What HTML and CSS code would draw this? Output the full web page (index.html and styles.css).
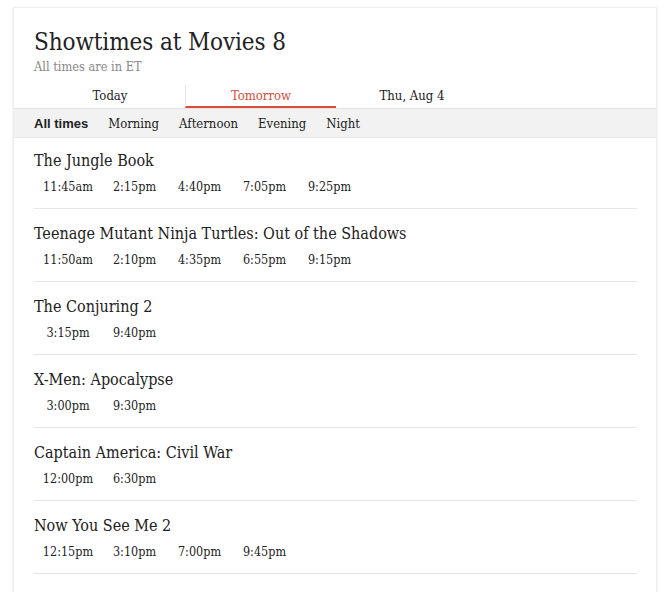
FILE: index.html
```html
<!DOCTYPE html>
<html lang="en">
<head>
<meta charset="utf-8">
<title>Showtimes at Movies 8</title>
<link rel="stylesheet" href="styles.css">
</head>
<body>
<div class="card">
  <div class="header">
    <h1 class="title">Showtimes at Movies 8</h1>
    <div class="subtitle">All times are in ET</div>
  </div>
  <div class="tabs">
    <div class="tab">Today</div>
    <div class="tab active">Tomorrow</div>
    <div class="tab">Thu, Aug 4</div>
  </div>
  <div class="filters">
    <span class="filter selected">All times</span>
    <span class="filter">Morning</span>
    <span class="filter">Afternoon</span>
    <span class="filter">Evening</span>
    <span class="filter">Night</span>
  </div>
  <div class="movies">
    <div class="movie">
      <div class="movie-title">The Jungle Book</div>
      <div class="times"><span class="time">11:45am</span><span class="time">2:15pm</span><span class="time">4:40pm</span><span class="time">7:05pm</span><span class="time">9:25pm</span></div>
    </div>
    <div class="movie">
      <div class="movie-title">Teenage Mutant Ninja Turtles: Out of the Shadows</div>
      <div class="times"><span class="time">11:50am</span><span class="time">2:10pm</span><span class="time">4:35pm</span><span class="time">6:55pm</span><span class="time">9:15pm</span></div>
    </div>
    <div class="movie">
      <div class="movie-title">The Conjuring 2</div>
      <div class="times"><span class="time">3:15pm</span><span class="time">9:40pm</span></div>
    </div>
    <div class="movie">
      <div class="movie-title">X-Men: Apocalypse</div>
      <div class="times"><span class="time">3:00pm</span><span class="time">9:30pm</span></div>
    </div>
    <div class="movie">
      <div class="movie-title">Captain America: Civil War</div>
      <div class="times"><span class="time">12:00pm</span><span class="time">6:30pm</span></div>
    </div>
    <div class="movie">
      <div class="movie-title">Now You See Me 2</div>
      <div class="times"><span class="time">12:15pm</span><span class="time">3:10pm</span><span class="time">7:00pm</span><span class="time">9:45pm</span></div>
    </div>
  </div>
</div>
</body>
</html>
```
FILE: styles.css
```css
html, body {
  margin: 0;
  padding: 0;
  background: #ffffff;
}
body {
  padding: 7px 9px 0 13px;
  font-family: "DejaVu Serif", serif;
  color: #222222;
}
.card {
  background: #ffffff;
  border: 1px solid #eeeeee;
  border-bottom: none;
  box-shadow: 0 1px 2px rgba(0, 0, 0, 0.12);
  min-height: 600px;
}
.header {
  padding: 20px 20px 0 20px;
}
.title {
  margin: 0;
  font-weight: normal;
  font-size: 24px;
  line-height: 28px;
  color: #222222;
  font-stretch: condensed;
  letter-spacing: -0.1px;
}
.subtitle {
  font-size: 12.7px;
  line-height: 16px;
  color: #888888;
  font-stretch: condensed;
  margin-top: 3px;
}
.tabs {
  display: flex;
  padding: 0 20px;
  margin-top: 10px;
}
.tab {
  width: 151px;
  text-align: center;
  font-size: 13px;
  line-height: 21px;
  height: 23px;
  box-sizing: border-box;
  font-stretch: condensed;
  color: #222222;
  border-left: 1px solid transparent;
}
.tab.active {
  color: #dd4b39;
  border-bottom: 2px solid #dd4b39;
  border-left: 1px solid #e6e6e6;
}
.filters {
  display: flex;
  align-items: center;
  background: #f2f2f2;
  border-top: 1px solid #e4e4e4;
  border-bottom: 1px solid #e8e8e8;
  height: 28px;
  padding: 0 20px;
}
.filter {
  font-size: 13px;
  font-stretch: condensed;
  color: #222222;
  margin-right: 20px;
}
.filter.selected {
  font-family: "Liberation Sans", Arial, sans-serif;
  font-weight: bold;
  font-stretch: normal;
}
.movies {
  padding: 0 19px 0 20px;
}
.movie {
  border-bottom: 1px solid #e6e6e6;
  height: 73px;
  padding-top: 14px;
  box-sizing: border-box;
}
.movie:first-child {
  height: 71px;
  padding-top: 12px;
}
.movie-title {
  font-size: 16px;
  line-height: 21px;
  font-stretch: condensed;
  color: #222222;
}
.times {
  display: flex;
  margin-top: 8px;
}
.time {
  width: 65px;
  text-align: center;
  font-size: 12.5px;
  line-height: 16px;
  font-stretch: condensed;
  color: #222222;
}
.time:first-child {
  width: 68px;
}
```
